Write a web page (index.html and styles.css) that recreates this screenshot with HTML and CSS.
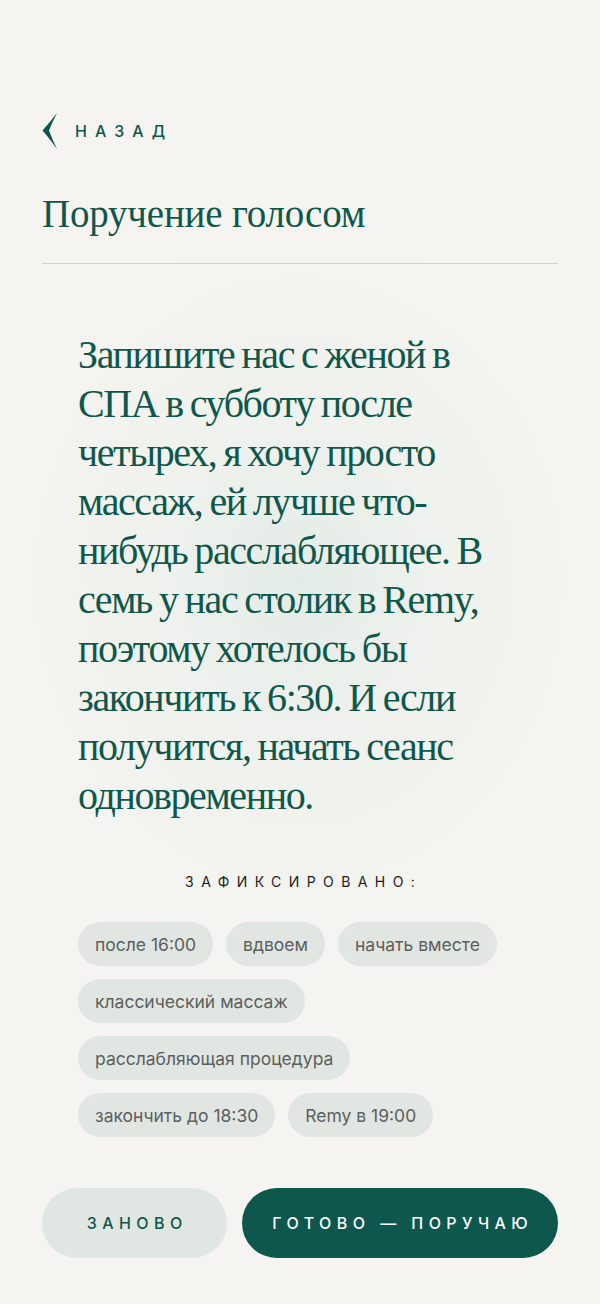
FILE: index.html
```html
<!DOCTYPE html>
<html lang="ru">
<head>
<meta charset="utf-8">
<title>Поручение голосом</title>
<link rel="stylesheet" href="styles.css">
</head>
<body>
<div class="page">
  <a class="back" href="#">
    <svg class="back-icon" width="16" height="38" viewBox="0 0 16 38"><path d="M15 1 Q8 10 0.5 18.5 Q8 27 15 37 Q10.5 28 7 18.5 Q10.5 9.5 15 1 Z" fill="#0f574b"/></svg>
    <span class="back-label">НАЗАД</span>
  </a>
  <h1 class="title">Поручение голосом</h1>
  <div class="divider"></div>
  <section class="transcript">
    <p class="quote">Запишите нас с женой в СПА в субботу после четырех, я хочу просто массаж, ей лучше что-нибудь расслабляющее. В семь у нас столик в Remy, поэтому хотелось бы закончить к 6:30. И если получится, начать сеанс одновременно.</p>
    <div class="fixed-label">ЗАФИКСИРОВАНО:</div>
    <ul class="chips">
      <li class="chip">после 16:00</li>
      <li class="chip">вдвоем</li>
      <li class="chip">начать вместе</li>
      <li class="chip">классический массаж</li>
      <li class="chip">расслабляющая процедура</li>
      <li class="chip">закончить до 18:30</li>
      <li class="chip">Remy в 19:00</li>
    </ul>
  </section>
  <div class="actions">
    <button class="btn btn-secondary">ЗАНОВО</button>
    <button class="btn btn-primary">ГОТОВО — ПОРУЧАЮ</button>
  </div>
</div>
</body>
</html>
```
FILE: styles.css
```css
html, body {
  margin: 0;
  padding: 0;
}
body {
  width: 600px;
  min-height: 1304px;
  background-color: #f5f4f0;
  background-image: radial-gradient(ellipse 330px 380px at 300px 580px, rgba(226, 236, 230, 0.95) 0%, rgba(236, 240, 236, 0.6) 45%, rgba(245, 244, 240, 0) 100%);
  background-repeat: no-repeat;
  font-family: "Liberation Serif", serif;
  color: #0f574b;
}
.page {
  padding: 112px 42px 0;
  display: flex;
  flex-direction: column;
}
.back {
  display: flex;
  align-items: center;
  gap: 17px;
  text-decoration: none;
  color: #0f574b;
  height: 38px;
}
.back-icon {
  display: block;
}
.back-label {
  font-family: "Inter", "Liberation Sans", sans-serif;
  font-size: 16px;
  letter-spacing: 0.5em;
  font-weight: 500;
}
.title {
  margin: 41px 0 0;
  font-weight: 400;
  font-size: 39px;
  line-height: 46px;
  letter-spacing: -0.005em;
  color: #0f574b;
}
.divider {
  height: 1px;
  background: #c9d5d1;
  margin-top: 26px;
}
.transcript {
  padding: 0 36px;
  display: flex;
  flex-direction: column;
}
.quote {
  margin: 66px 0 0;
  font-size: 40px;
  line-height: 49px;
  letter-spacing: -0.035em;
  word-spacing: -0.04em;
  color: #0f574b;
}
.fixed-label {
  margin-top: 53px;
  text-align: center;
  font-family: "Inter", "Liberation Sans", sans-serif;
  font-size: 14px;
  letter-spacing: 0.53em;
  color: #1a1e1c;
  padding-left: 0.53em;
}
.chips {
  list-style: none;
  margin: 32px 0 0;
  padding: 0;
  display: flex;
  flex-wrap: wrap;
  gap: 13px 13px;
}
.chip {
  background: #e1e6e2;
  border-radius: 22px;
  height: 44px;
  padding: 0 17px;
  display: flex;
  align-items: center;
  font-family: "Inter", "Liberation Sans", sans-serif;
  font-size: 17.5px;
  color: #5b605d;
}
.actions {
  margin-top: 51px;
  display: flex;
  gap: 15px;
}
.btn {
  height: 70px;
  border: none;
  border-radius: 35px;
  font-family: "Inter", "Liberation Sans", sans-serif;
  font-size: 16px;
  font-weight: 500;
  letter-spacing: 0.34em;
  padding: 0 0 0 0.34em;
}
.btn-secondary {
  width: 185px;
  background: #e0e6e2;
  color: #0f574b;
}
.btn-primary {
  flex: 1;
  background: #0d574c;
  color: #ffffff;
}
```
